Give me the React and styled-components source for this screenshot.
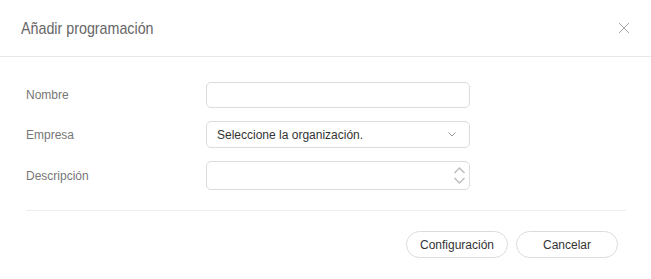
import React from "react";
import styled, { createGlobalStyle } from "styled-components";

const GlobalStyle = createGlobalStyle`
  html, body {
    margin: 0;
    padding: 0;
    background: #fff;
  }
  body {
    font-family: "Liberation Sans", Arial, sans-serif;
  }
`;

const Dialog = styled.div`
  width: 651px;
  height: 279px;
  background: #fff;
  display: flex;
  flex-direction: column;
`;

const Header = styled.div`
  height: 57px;
  border-bottom: 1px solid #e8e8e8;
  display: flex;
  align-items: center;
  justify-content: space-between;
  padding: 0 20px 0 21px;
  box-sizing: border-box;
  flex-shrink: 0;
`;

// the original uses a condensed face; squeeze Liberation Sans to match
const Title = styled.h2`
  margin: 0;
  font-size: 17px;
  font-weight: 400;
  color: #666;
  padding-top: 2px;
  transform: scaleX(0.84);
  transform-origin: left center;
`;

const Close = styled.button`
  border: none;
  background: none;
  padding: 0;
  width: 14px;
  height: 14px;
  display: flex;
  align-items: center;
  justify-content: center;
  cursor: pointer;
`;

const Body = styled.div`
  padding: 25px 25px 0 26px;
  display: flex;
  flex-direction: column;
  gap: 13px;
`;

const Row = styled.div`
  display: flex;
  align-items: center;
`;

const Label = styled.label`
  width: 180px;
  font-size: 12px;
  color: #777;
`;

const Field = styled.div`
  width: 264px;
  height: ${(p) => p.h}px;
  border: 1px solid #dcdcdc;
  border-radius: 5px;
  box-sizing: border-box;
  display: flex;
  align-items: center;
  padding: 0 10px;
  font-size: 12px;
  color: #333;
`;

const Input = styled.input`
  border: none;
  outline: none;
  background: transparent;
  flex: 1;
  font: inherit;
  padding: 0;
`;

const SelectText = styled.span`
  flex: 1;
`;

const Spinner = styled.div`
  display: flex;
  flex-direction: column;
  gap: 1px;
  margin-right: -7px;
`;

const Divider = styled.div`
  margin: 20px 25px 0 26px;
  height: 1px;
  background: #efefef;
`;

const Footer = styled.div`
  display: flex;
  justify-content: flex-end;
  gap: 8px;
  padding: 20px 33px 0 0;
`;

const Button = styled.button`
  width: 102px;
  height: 27px;
  border: 1px solid #dcdcdc;
  border-radius: 14px;
  background: #fff;
  font-family: "Liberation Sans", Arial, sans-serif;
  font-size: 12px;
  color: #333;
  cursor: pointer;
`;

export default function App() {
  return (
    <>
      <GlobalStyle />
      <Dialog>
        <Header>
          <Title>Añadir programación</Title>
          <Close aria-label="Cerrar">
            <svg width="12" height="12" viewBox="0 0 12 12">
              <path d="M1 1L11 11M11 1L1 11" stroke="#a6a6a6" strokeWidth="1" fill="none" />
            </svg>
          </Close>
        </Header>
        <Body>
          <Row>
            <Label>Nombre</Label>
            <Field h={26}>
              <Input />
            </Field>
          </Row>
          <Row>
            <Label>Empresa</Label>
            <Field h={27}>
              <SelectText>Seleccione la organización.</SelectText>
              <svg width="8" height="5" viewBox="0 0 8 5" style={{ marginRight: 3 }}>
                <path d="M0.5 0.5L4 4L7.5 0.5" stroke="#999" strokeWidth="1" fill="none" />
              </svg>
            </Field>
          </Row>
          <Row>
            <Label>Descripción</Label>
            <Field h={29}>
              <Input />
              <Spinner>
                <svg width="13" height="9" viewBox="0 0 13 9">
                  <path d="M1.5 7L6.5 2L11.5 7" stroke="#bdbdbd" strokeWidth="1.5" fill="none" />
                </svg>
                <svg width="13" height="9" viewBox="0 0 13 9">
                  <path d="M1.5 2L6.5 7L11.5 2" stroke="#bdbdbd" strokeWidth="1.5" fill="none" />
                </svg>
              </Spinner>
            </Field>
          </Row>
        </Body>
        <Divider />
        <Footer>
          <Button>Configuración</Button>
          <Button>Cancelar</Button>
        </Footer>
      </Dialog>
    </>
  );
}
